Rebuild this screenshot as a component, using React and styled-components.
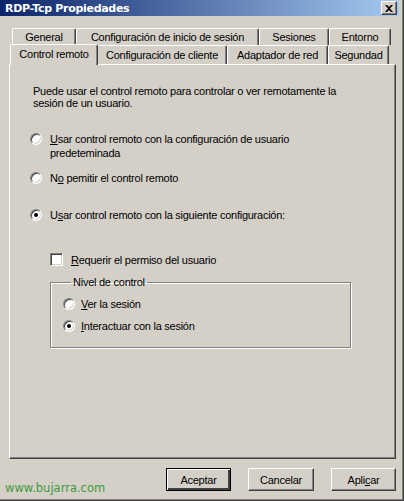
import React from 'react';
import styled, { createGlobalStyle } from 'styled-components';

const Global = createGlobalStyle`
  html, body { margin: 0; padding: 0; background: #d4d0c8; }
  body { font-family: "Liberation Sans", Arial, sans-serif; font-size: 11px; letter-spacing: -0.25px; color: #000; }
`;

const Window = styled.div`
  width: 404px;
  height: 501px;
  box-sizing: border-box;
  background: #d4d0c8;
  display: flex;
  flex-direction: column;
  border-right: 1px solid #404040;
  border-bottom: 1px solid #404040;
  box-shadow: inset -1px -1px 0 #808080;
  padding-right: 3px;
  padding-bottom: 3px;
`;

const TitleBar = styled.div`
  height: 18px;
  margin-right: 1px;
  display: flex;
  align-items: center;
  justify-content: space-between;
  padding: 0 2px 0 5px;
  background: linear-gradient(to right, #0a246a, #a6caf0);
  color: #fff;
  font-family: "DejaVu Sans", Verdana, sans-serif;
  font-weight: bold;
  font-size: 11px;
  letter-spacing: -0.3px;
`;

const CloseButton = styled.div`
  width: 16px;
  height: 14px;
  box-sizing: border-box;
  background: #d4d0c8;
  border-top: 1px solid #fff;
  border-left: 1px solid #fff;
  border-right: 1px solid #404040;
  border-bottom: 1px solid #404040;
  box-shadow: inset -1px -1px 0 #808080;
  display: flex;
  align-items: center;
  justify-content: center;
`;

const Body = styled.div`
  flex: 1;
  display: flex;
  flex-direction: column;
  padding: 12px 0 0 9px;
`;

const TabRow = styled.div`
  display: flex;
  align-items: flex-end;
  padding-left: ${p => p.$indent}px;
  height: ${p => p.$h}px;
`;

const Tab = styled.div`
  width: ${p => p.$w}px;
  height: ${p => (p.$active ? p.$h + 2 : p.$h)}px;
  box-sizing: border-box;
  display: flex;
  align-items: center;
  justify-content: center;
  border-left: 1px solid #fff;
  border-top: 1px solid #fff;
  border-right: 1px solid #404040;
  box-shadow: inset -1px 0 0 #808080;
  border-radius: 2px 2px 0 0;
  background: #d4d0c8;
  white-space: nowrap;
  position: relative;
  z-index: ${p => (p.$active ? 2 : 1)};
  margin: ${p => (p.$active ? '0 -1px -1px -3px' : '0')};
  padding-bottom: ${p => (p.$active ? 2 : 0)}px;
`;

const Panel = styled.div`
  width: 387px;
  height: 395px;
  box-sizing: border-box;
  border-left: 1px solid #fff;
  border-top: 1px solid #fff;
  border-right: 1px solid #404040;
  border-bottom: 1px solid #404040;
  box-shadow: inset -1px -1px 0 #808080;
  padding: 20px 20px 0 23px;
  display: flex;
  flex-direction: column;
`;

const Intro = styled.p`
  margin: 0;
  line-height: 12px;
  width: 310px;
`;

const Option = styled.label`
  display: flex;
  align-items: flex-start;
  gap: ${p => p.$gap || 8}px;
  margin-top: ${p => p.$mt}px;
  margin-left: ${p => p.$ml || 0}px;
  line-height: 14px;
`;

const Radio = styled.span`
  flex: none;
  width: 12px;
  height: 12px;
  margin-top: 1px;
  box-sizing: border-box;
  border-radius: 50%;
  background: #fff;
  border: 1px solid;
  border-color: #808080 #fff #fff #808080;
  box-shadow: inset 1px 1px 0 #404040, inset -1px -1px 0 #d4d0c8;
  display: flex;
  align-items: center;
  justify-content: center;
  &::after {
    content: '';
    width: 4px;
    height: 4px;
    border-radius: 50%;
    background: ${p => (p.$on ? '#000' : 'transparent')};
  }
`;

const Check = styled.span`
  flex: none;
  width: 13px;
  height: 13px;
  box-sizing: border-box;
  background: #fff;
  border: 1px solid;
  border-color: #808080 #fff #fff #808080;
  box-shadow: inset 1px 1px 0 #404040, inset -1px -1px 0 #d4d0c8;
`;

const U = styled.span`
  text-decoration: underline;
  text-underline-offset: 1px;
`;

const Group = styled.fieldset`
  margin: 9px 0 0 17px;
  width: 301px;
  height: 72px;
  box-sizing: border-box;
  padding: 9px 0 0 12px;
  border: 1px solid #808080;
  box-shadow: 1px 1px 0 #fff, inset 1px 1px 0 #fff;
  legend {
    padding: 0 2px;
    margin-left: 8px;
    line-height: 12px;
  }
`;

const Footer = styled.div`
  display: flex;
  align-items: flex-end;
  height: 38px;
  padding-right: 4px;
`;

const Watermark = styled.div`
  font-family: "DejaVu Sans", Verdana, sans-serif;
  font-size: 11.5px;
  letter-spacing: 0;
  color: #3d9a3d;
  margin: 0 auto 2px -4px;
`;

const Buttons = styled.div`
  display: flex;
  gap: 17px;
  align-self: flex-start;
  margin-top: 9px;
`;

const Button = styled.div`
  width: ${p => p.$w}px;
  height: 23px;
  box-sizing: border-box;
  display: flex;
  align-items: center;
  justify-content: center;
  background: #d4d0c8;
  border-top: 1px solid #fff;
  border-left: 1px solid #fff;
  border-right: 1px solid #404040;
  border-bottom: 1px solid #404040;
  box-shadow: inset -1px -1px 0 #808080;
  ${p => p.$default && `
    border: 1px solid #000;
    box-shadow: inset 1px 1px 0 #fff, inset -2px -2px 0 #404040, inset -1px -1px 0 #808080;
  `}
`;

export default function App() {
  const row1 = [
    ['General', 64],
    ['Configuración de inicio de sesión', 183],
    ['Sesiones', 70],
    ['Entorno', 62],
  ];
  const row2 = [
    ['Control remoto', 88, true],
    ['Configuración de cliente', 130],
    ['Adaptador de red', 101],
    ['Segundad', 61],
  ];
  return (
    <Window>
      <Global />
      <TitleBar>
        <span>RDP-Tcp Propiedades</span>
        <CloseButton>
          <svg width="8" height="7" viewBox="0 0 8 7">
            <path d="M0 0h2l2 2 2-2h2L5 3.5 8 7H6L4 5 2 7H0l3-3.5z" fill="#000" />
          </svg>
        </CloseButton>
      </TitleBar>
      <Body>
        <TabRow $indent={3} $h={17}>
          {row1.map(([t, w]) => (
            <Tab key={t} $w={w} $h={17}>{t}</Tab>
          ))}
        </TabRow>
        <TabRow $indent={4} $h={19}>
          {row2.map(([t, w, a]) => (
            <Tab key={t} $w={w} $h={19} $active={a}>{t}</Tab>
          ))}
        </TabRow>
        <Panel>
          <Intro>Puede usar el control remoto para controlar o ver remotamente la sesión de un usuario.</Intro>
          <Option $mt={23} $ml={-3}>
            <Radio />
            <span><U>U</U>sar control remoto con la configuración de usuario<br />predeteminada</span>
          </Option>
          <Option $mt={11} $ml={-3}>
            <Radio />
            <span>N<U>o</U> pemitir el control remoto</span>
          </Option>
          <Option $mt={23} $ml={-3}>
            <Radio $on />
            <span>U<U>s</U>ar control remoto con la siguiente configuración:</span>
          </Option>
          <Option $mt={31} $ml={17} $gap={8}>
            <Check />
            <span><U>R</U>equerir el permiso del usuario</span>
          </Option>
          <Group>
            <legend>Nivel de control</legend>
            <Option $mt={0} $gap={6}>
              <Radio />
              <span><U>V</U>er la sesión</span>
            </Option>
            <Option $mt={8} $gap={6}>
              <Radio $on />
              <span><U>I</U>nteractuar con la sesión</span>
            </Option>
          </Group>
        </Panel>
        <Footer>
          <Watermark>www.bujarra.com</Watermark>
          <Buttons>
            <Button $w={65} $default>Aceptar</Button>
            <Button $w={66}>Cancelar</Button>
            <Button $w={65}>Apli<U>c</U>ar</Button>
          </Buttons>
        </Footer>
      </Body>
    </Window>
  );
}
